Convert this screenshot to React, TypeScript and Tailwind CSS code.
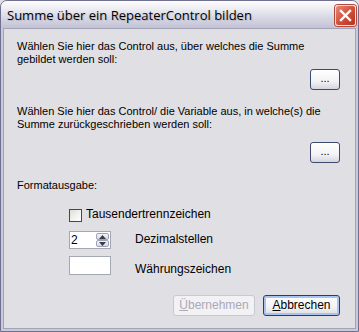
import React from "react";

const body = { fontFamily: '"Liberation Sans", Arial, sans-serif' };

function XpButton({ children, className = "" }: { children: React.ReactNode; className?: string }) {
  return (
    <div
      className={
        "flex items-center justify-center rounded-[3px] border border-[#3d4a6e] bg-[linear-gradient(#ffffff,#f3f3f5_60%,#d6d5de)] text-[11px] text-black " +
        className
      }
    >
      {children}
    </div>
  );
}

export default function App() {
  return (
    <div className="w-[359px] h-[332px] bg-[#e0dfe3]">
      <div
        className="w-[359px] h-[332px] flex flex-col rounded-t-[7px] border border-[#707093] bg-[#c9c9d9] overflow-hidden"
        style={body}
      >
        {/* title bar */}
        <div className="h-[27px] shrink-0 flex items-center justify-between pl-[6px] pr-[2px] bg-[linear-gradient(#fdfdfe,#ececf2_30%,#d9d9e5_60%,#c2c2d6)]">
          <span
            className="text-[13px] text-black leading-none mt-[2px] [text-shadow:1px_1px_1px_rgba(0,0,0,0.15)]"
            style={{ fontFamily: '"Open Sans", "DejaVu Sans", sans-serif' }}
          >
            Summe über ein RepeaterControl bilden
          </span>
          <div className="w-[21px] h-[21px] mt-[2px] rounded-[3px] border border-white/80 bg-[linear-gradient(135deg,#e88b7b,#d2503c_50%,#b8321f)] flex items-center justify-center shadow-[0_0_0_1px_#b04a3a]">
            <svg width="13" height="13" viewBox="0 0 13 13">
              <path d="M2 2 L11 11 M11 2 L2 11" stroke="white" strokeWidth="2.4" strokeLinecap="square" />
            </svg>
          </div>
        </div>

        {/* client area */}
        <div className="flex-1 mx-[2px] mb-[2px] border border-[#a3a3b8] bg-[#e0dfe3] flex flex-col pl-[13px] pr-[15px] pt-[11px] text-[11px] leading-[13px] text-black">
          <p>
            Wählen Sie hier das Control aus, über welches die Summe
            <br />
            gebildet werden soll:
          </p>
          <div className="flex justify-end mt-[3px]">
            <XpButton className="w-[30px] h-[21px] text-[#4b2a80] pb-[3px]">...</XpButton>
          </div>
          <p className="mt-[15px]">
            Wählen Sie hier das Control/ die Variable aus, in welche(s) die
            <br />
            Summe zurückgeschrieben werden soll:
          </p>
          <div className="flex justify-end mt-[11px]">
            <XpButton className="w-[30px] h-[21px] text-[#4b2a80] pb-[3px]">...</XpButton>
          </div>
          <p className="mt-[16px]">Formatausgabe:</p>

          <div className="ml-[52px] mt-[15px] flex items-center">
            <div className="w-[13px] h-[13px] border border-[#1c5180] bg-[linear-gradient(135deg,#dcdcd7,#f4f4f2_60%,#ffffff)]" />
            <span className="ml-[4px] text-[12px] leading-[14px] mb-[2px]">Tausendertrennzeichen</span>
          </div>

          <div className="ml-[52px] mt-[8px] flex items-center">
            <div className="w-[42px] h-[18px] border border-[#a4a8b4] bg-white flex items-center justify-between pl-[1px] pr-[1px]">
              <span className="text-[12px] leading-none">2</span>
              <div className="flex flex-col gap-0 w-[13px] h-[14px]">
                <div className="h-[7px] rounded-[2px] border border-[#9da3b6] bg-[linear-gradient(#f4f4f8,#d8d8e2)] flex items-center justify-center">
                  <svg width="7" height="4" viewBox="0 0 7 4"><path d="M0 4 L3.5 0 L7 4 Z" fill="#3a3a4a" /></svg>
                </div>
                <div className="h-[7px] rounded-[2px] border border-[#9da3b6] bg-[linear-gradient(#f4f4f8,#d8d8e2)] flex items-center justify-center">
                  <svg width="7" height="4" viewBox="0 0 7 4"><path d="M0 0 L3.5 4 L7 0 Z" fill="#3a3a4a" /></svg>
                </div>
              </div>
            </div>
            <span className="ml-[24px] text-[12px] leading-[14px] mb-[3px]">Dezimalstellen</span>
          </div>

          <div className="ml-[52px] mt-[7px] flex items-start h-[19px]">
            <div className="w-[42px] h-[19px] border border-[#a4a8b4] bg-white" />
            <span className="ml-[24px] mt-[6px] text-[12px] leading-[14px]">Währungszeichen</span>
          </div>

          <div className="flex justify-end gap-[8px] mt-[20px]">
            <div className="w-[82px] h-[21px] rounded-[3px] border border-[#c9c7cf] bg-[#f2f1f3] flex items-center justify-center text-[12px] text-[#aca8b8]">
              <span><span className="underline">Ü</span>bernehmen</span>
            </div>
            <div className="w-[77px] h-[21px] rounded-[3px] border border-[#243c78] bg-[linear-gradient(#ffffff,#f3f3f5_60%,#dad9e2)] shadow-[inset_0_0_0_2px_#a8c4ef] flex items-center justify-center text-[12px]">
              <span><span className="underline">A</span>bbrechen</span>
            </div>
          </div>
        </div>
      </div>
    </div>
  );
}
